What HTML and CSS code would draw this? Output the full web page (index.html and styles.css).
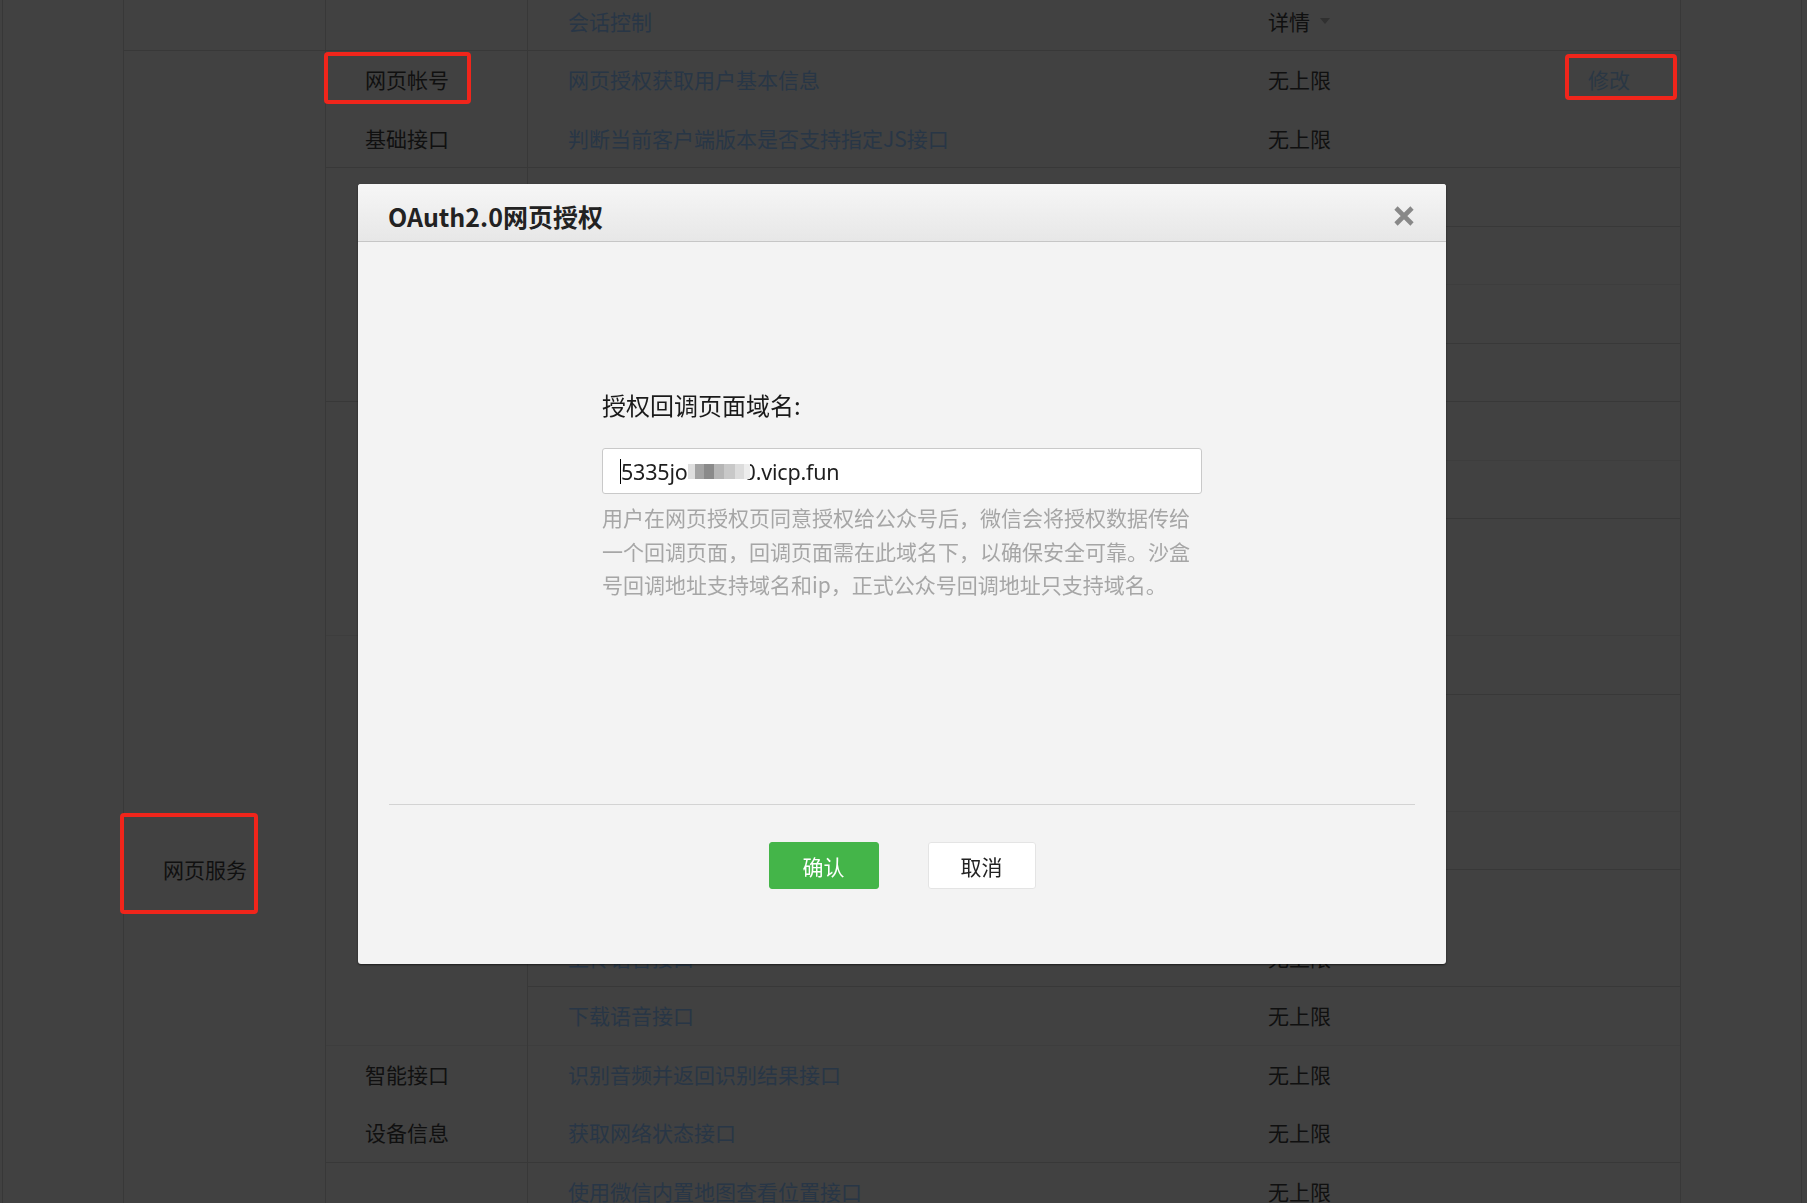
FILE: index.html
```html
<!DOCTYPE html>
<html lang="zh-CN">
<head>
<meta charset="utf-8">
<title>接口权限 - OAuth2.0网页授权</title>
<link rel="stylesheet" href="styles.css">
</head>
<body>
<div class="page">
  <div class="rail"></div>
  <div class="tbl">
    <div class="grp">
      <div class="cell-b">对话服务</div>
      <div class="subs">
        <div class="sub">
          <div class="cell-c">客服接口</div>
          <div class="rows">
            <div class="row"><div class="c-d">客服管理</div><div class="c-e">无上限</div><div class="c-f"></div></div>
            <div class="row ln"><div class="c-d">发送消息</div><div class="c-e">无上限</div><div class="c-f"></div></div>
            <div class="row ln"><div class="c-d">会话控制</div><div class="c-e">详情<i class="tri"></i></div><div class="c-f"></div></div>
          </div>
        </div>
      </div>
    </div>
    <div class="grp ln">
      <div class="cell-b">网页服务</div>
      <div class="subs">
        <div class="sub">
          <div class="cell-c">网页帐号</div>
          <div class="rows">
            <div class="row"><div class="c-d">网页授权获取用户基本信息</div><div class="c-e">无上限</div><div class="c-f">修改</div></div>
          </div>
        </div>
        <div class="sub">
          <div class="cell-c">基础接口</div>
          <div class="rows">
            <div class="row"><div class="c-d">判断当前客户端版本是否支持指定JS接口</div><div class="c-e">无上限</div><div class="c-f"></div></div>
          </div>
        </div>
        <div class="sub ln">
          <div class="cell-c">分享接口</div>
          <div class="rows">
            <div class="row"><div class="c-d">获取“分享到朋友圈”按钮点击状态及自定义分享内容接口</div><div class="c-e">无上限</div><div class="c-f"></div></div>
            <div class="row ln"><div class="c-d">获取“分享给朋友”按钮点击状态及自定义分享内容接口</div><div class="c-e">无上限</div><div class="c-f"></div></div>
            <div class="row lf"><div class="c-d">获取“分享到QQ”按钮点击状态及自定义分享内容接口</div><div class="c-e">无上限</div><div class="c-f"></div></div>
            <div class="row ln"><div class="c-d">获取“分享到腾讯微博”按钮点击状态及自定义分享内容接口</div><div class="c-e">无上限</div><div class="c-f"></div></div>
          </div>
        </div>
        <div class="sub ln">
          <div class="cell-c">图像接口</div>
          <div class="rows">
            <div class="row"><div class="c-d">拍照或从手机相册中选图接口</div><div class="c-e">无上限</div><div class="c-f"></div></div>
            <div class="row lf"><div class="c-d">预览图片接口</div><div class="c-e">无上限</div><div class="c-f"></div></div>
            <div class="row ln"><div class="c-d">上传图片接口</div><div class="c-e">无上限</div><div class="c-f"></div></div>
            <div class="row"><div class="c-d">下载图片接口</div><div class="c-e">无上限</div><div class="c-f"></div></div>
          </div>
        </div>
        <div class="sub lf">
          <div class="cell-c">音频接口</div>
          <div class="rows">
            <div class="row"><div class="c-d">开始录音接口</div><div class="c-e">无上限</div><div class="c-f"></div></div>
            <div class="row ln"><div class="c-d">停止录音接口</div><div class="c-e">无上限</div><div class="c-f"></div></div>
            <div class="row"><div class="c-d">播放语音接口</div><div class="c-e">无上限</div><div class="c-f"></div></div>
            <div class="row lf"><div class="c-d">暂停播放接口</div><div class="c-e">无上限</div><div class="c-f"></div></div>
            <div class="row ln"><div class="c-d">停止播放接口</div><div class="c-e">无上限</div><div class="c-f"></div></div>
            <div class="row"><div class="c-d">上传语音接口</div><div class="c-e">无上限</div><div class="c-f"></div></div>
            <div class="row ln"><div class="c-d">下载语音接口</div><div class="c-e">无上限</div><div class="c-f"></div></div>
          </div>
        </div>
        <div class="sub lf">
          <div class="cell-c">智能接口</div>
          <div class="rows">
            <div class="row"><div class="c-d">识别音频并返回识别结果接口</div><div class="c-e">无上限</div><div class="c-f"></div></div>
          </div>
        </div>
        <div class="sub">
          <div class="cell-c">设备信息</div>
          <div class="rows">
            <div class="row"><div class="c-d">获取网络状态接口</div><div class="c-e">无上限</div><div class="c-f"></div></div>
          </div>
        </div>
        <div class="sub ln">
          <div class="cell-c">地理位置</div>
          <div class="rows">
            <div class="row"><div class="c-d">使用微信内置地图查看位置接口</div><div class="c-e">无上限</div><div class="c-f"></div></div>
            <div class="row ln"><div class="c-d">获取地理位置接口</div><div class="c-e">无上限</div><div class="c-f"></div></div>
          </div>
        </div>
        <div class="sub ln">
          <div class="cell-c">界面操作</div>
          <div class="rows">
            <div class="row"><div class="c-d">隐藏右上角菜单接口</div><div class="c-e">无上限</div><div class="c-f"></div></div>
            <div class="row ln"><div class="c-d">显示右上角菜单接口</div><div class="c-e">无上限</div><div class="c-f"></div></div>
            <div class="row ln"><div class="c-d">关闭当前网页窗口接口</div><div class="c-e">无上限</div><div class="c-f"></div></div>
            <div class="row ln"><div class="c-d">批量隐藏功能按钮接口</div><div class="c-e">无上限</div><div class="c-f"></div></div>
            <div class="row ln"><div class="c-d">批量显示功能按钮接口</div><div class="c-e">无上限</div><div class="c-f"></div></div>
            <div class="row ln"><div class="c-d">隐藏所有非基础按钮接口</div><div class="c-e">无上限</div><div class="c-f"></div></div>
            <div class="row ln"><div class="c-d">显示所有功能按钮接口</div><div class="c-e">无上限</div><div class="c-f"></div></div>
          </div>
        </div>
      </div>
    </div>
  </div>
  <div class="rail-r"></div>
</div>

<div class="mark mark-1"></div>
<div class="mark mark-2"></div>
<div class="mark mark-3"></div>

<div class="modal">
  <div class="modal-hd">
    <h3 class="modal-title">OAuth2.0网页授权</h3>
    <svg class="close" viewBox="0 0 22 22" width="22" height="22" aria-label="关闭">
      <path d="M3 3 L19 19 M19 3 L3 19" stroke="#888" stroke-width="4.6" fill="none"/>
    </svg>
  </div>
  <div class="modal-bd">
    <div class="form">
      <label class="form-label">授权回调页面域名:</label>
      <div class="field"><span class="cursor"></span>5335jo<span class="mosaic"></span>0.vicp.fun</div>
      <p class="tips">用户在网页授权页同意授权给公众号后，微信会将授权数据传给一个回调页面，回调页面需在此域名下，以确保安全可靠。沙盒号回调地址支持域名和ip，正式公众号回调地址只支持域名。</p>
    </div>
  </div>
  <div class="modal-ft">
    <button class="btn btn-primary">确认</button>
    <button class="btn btn-default">取消</button>
  </div>
</div>
</body>
</html>
```
FILE: styles.css
```css
html, body {
  margin: 0;
  height: 100%;
  overflow: hidden;
}
body {
  background: #414141;
  font-family: "Noto Sans CJK SC", "Noto Sans", sans-serif;
  color: #101010;
}

/* ---------- dimmed background table ---------- */
.page {
  display: flex;
  height: 100vh;
}
.rail {
  flex: none;
  width: 121px;
  margin-left: 2px;
  box-sizing: border-box;
  border-left: 1px solid #373737;
}
.rail-r {
  flex: none;
  width: 121px;
  box-sizing: border-box;
  border-right: 1px solid #373737;
}
.tbl {
  flex: none;
  align-self: flex-start;
  width: 1558px;
  box-sizing: border-box;
  margin-top: -125.5px;
  border-left: 1px solid #383838;
  border-right: 1px solid #383838;
  font-size: 21px;
}
.grp {
  display: flex;
}
.cell-b {
  flex: none;
  width: 201px;
  box-sizing: border-box;
  padding-left: 39px;
  display: flex;
  align-items: center;
}
.subs {
  flex: 1;
  display: flex;
  flex-direction: column;
}
.sub {
  display: flex;
}
.cell-c {
  flex: none;
  width: 202px;
  box-sizing: border-box;
  border-left: 1px solid #383838;
  padding-left: 39px;
  display: flex;
  align-items: center;
}
.rows {
  flex: 1;
  border-left: 1px solid #383838;
  display: flex;
  flex-direction: column;
}
.row {
  height: 58.5px;
  display: flex;
  align-items: center;
  white-space: nowrap;
}
.ln { box-shadow: inset 0 1px 0 #383838; }
.lf { box-shadow: inset 0 1px 0 #3d3d3d; }

.c-d {
  flex: none;
  width: 700px;
  box-sizing: border-box;
  padding-left: 40px;
  color: #283646;
  overflow: hidden;
}
.c-e {
  flex: none;
  width: 320px;
  box-sizing: border-box;
  padding-left: 40px;
  display: flex;
  align-items: center;
}
.c-f {
  flex: none;
  width: 132px;
  box-sizing: border-box;
  padding-left: 40px;
  color: #2a3744;
}
.tri {
  display: inline-block;
  width: 0;
  height: 0;
  margin-left: 10px;
  border-left: 5px solid transparent;
  border-right: 5px solid transparent;
  border-top: 6px solid #303030;
}

/* ---------- annotation boxes ---------- */
.mark {
  position: absolute;
  box-sizing: border-box;
  border: 4px solid #f0251b;
  border-radius: 4px;
}
.mark-1 { left: 324px; top: 52px; width: 147px; height: 52px; }
.mark-2 { left: 1565px; top: 54px; width: 112px; height: 46px; }
.mark-3 { left: 120px; top: 813px; width: 138px; height: 101px; }

/* ---------- modal ---------- */
.modal {
  position: fixed;
  left: 358px;
  top: 184px;
  width: 1088px;
  height: 780px;
  background: #f3f3f3;
  border-radius: 3px;
  box-shadow: 0 1px 2px rgba(0, 0, 0, 0.55);
  display: flex;
  flex-direction: column;
  overflow: hidden;
}
.modal-hd {
  flex: none;
  height: 58px;
  box-sizing: border-box;
  padding: 7px 31px 0 30px;
  background: linear-gradient(#f6f6f6, #e7e7e7);
  border-bottom: 1px solid #c6c6c6;
  display: flex;
  align-items: center;
  justify-content: space-between;
}
.modal-title {
  margin: 0;
  font-size: 25px;
  line-height: 25px;
  font-weight: 700;
  color: #222;
}
.close {
  display: block;
  width: 22px;
  height: 22px;
}
.modal-bd {
  flex: 1;
  padding-top: 148px;
}
.form {
  width: 600px;
  margin: 0 auto;
}
.form-label {
  display: block;
  font-size: 24px;
  line-height: 30px;
  color: #1a1a1a;
  margin-bottom: 28px;
}
.field {
  height: 46px;
  box-sizing: border-box;
  border: 1px solid #c9c9c9;
  border-radius: 3px;
  background: #fff;
  padding: 1px 0 0 17px;
  display: flex;
  align-items: center;
  font-family: "Noto Sans", "Noto Sans CJK SC", sans-serif;
  font-size: 21.5px;
  letter-spacing: -0.2px;
  color: #1e1e1e;
}
.cursor {
  width: 1px;
  height: 25px;
  background: #000;
}
.mosaic {
  position: relative;
  width: 62px;
  height: 15px;
  margin-right: -6px;
  background: linear-gradient(90deg,
    #dedede 0 12%, #a3a3a3 12% 26%, #8a8a8a 26% 42%,
    #b5b5b5 42% 58%, #c8c8c8 58% 76%, #dcdcdc 76% 90%, #ededed 90% 100%);
}
.tips {
  margin: 7px 0 0;
  font-size: 21px;
  line-height: 33.5px;
  color: #a6a6a6;
}
.modal-ft {
  flex: none;
  height: 160px;
  box-sizing: border-box;
  margin: 0 31px;
  border-top: 1px solid #d3d3d3;
  padding-top: 37px;
  display: flex;
  justify-content: center;
  align-items: flex-start;
  gap: 49px;
}
.btn {
  height: 47px;
  padding: 0;
  border-radius: 3px;
  font-family: "Noto Sans CJK SC", sans-serif;
  font-size: 21px;
  cursor: pointer;
}
.btn-primary {
  width: 110px;
  background: #44b549;
  border: 1px solid #44b549;
  color: #fff;
}
.btn-default {
  width: 108px;
  background: #fff;
  border: 1px solid #e4e4e4;
  color: #222;
}
```
